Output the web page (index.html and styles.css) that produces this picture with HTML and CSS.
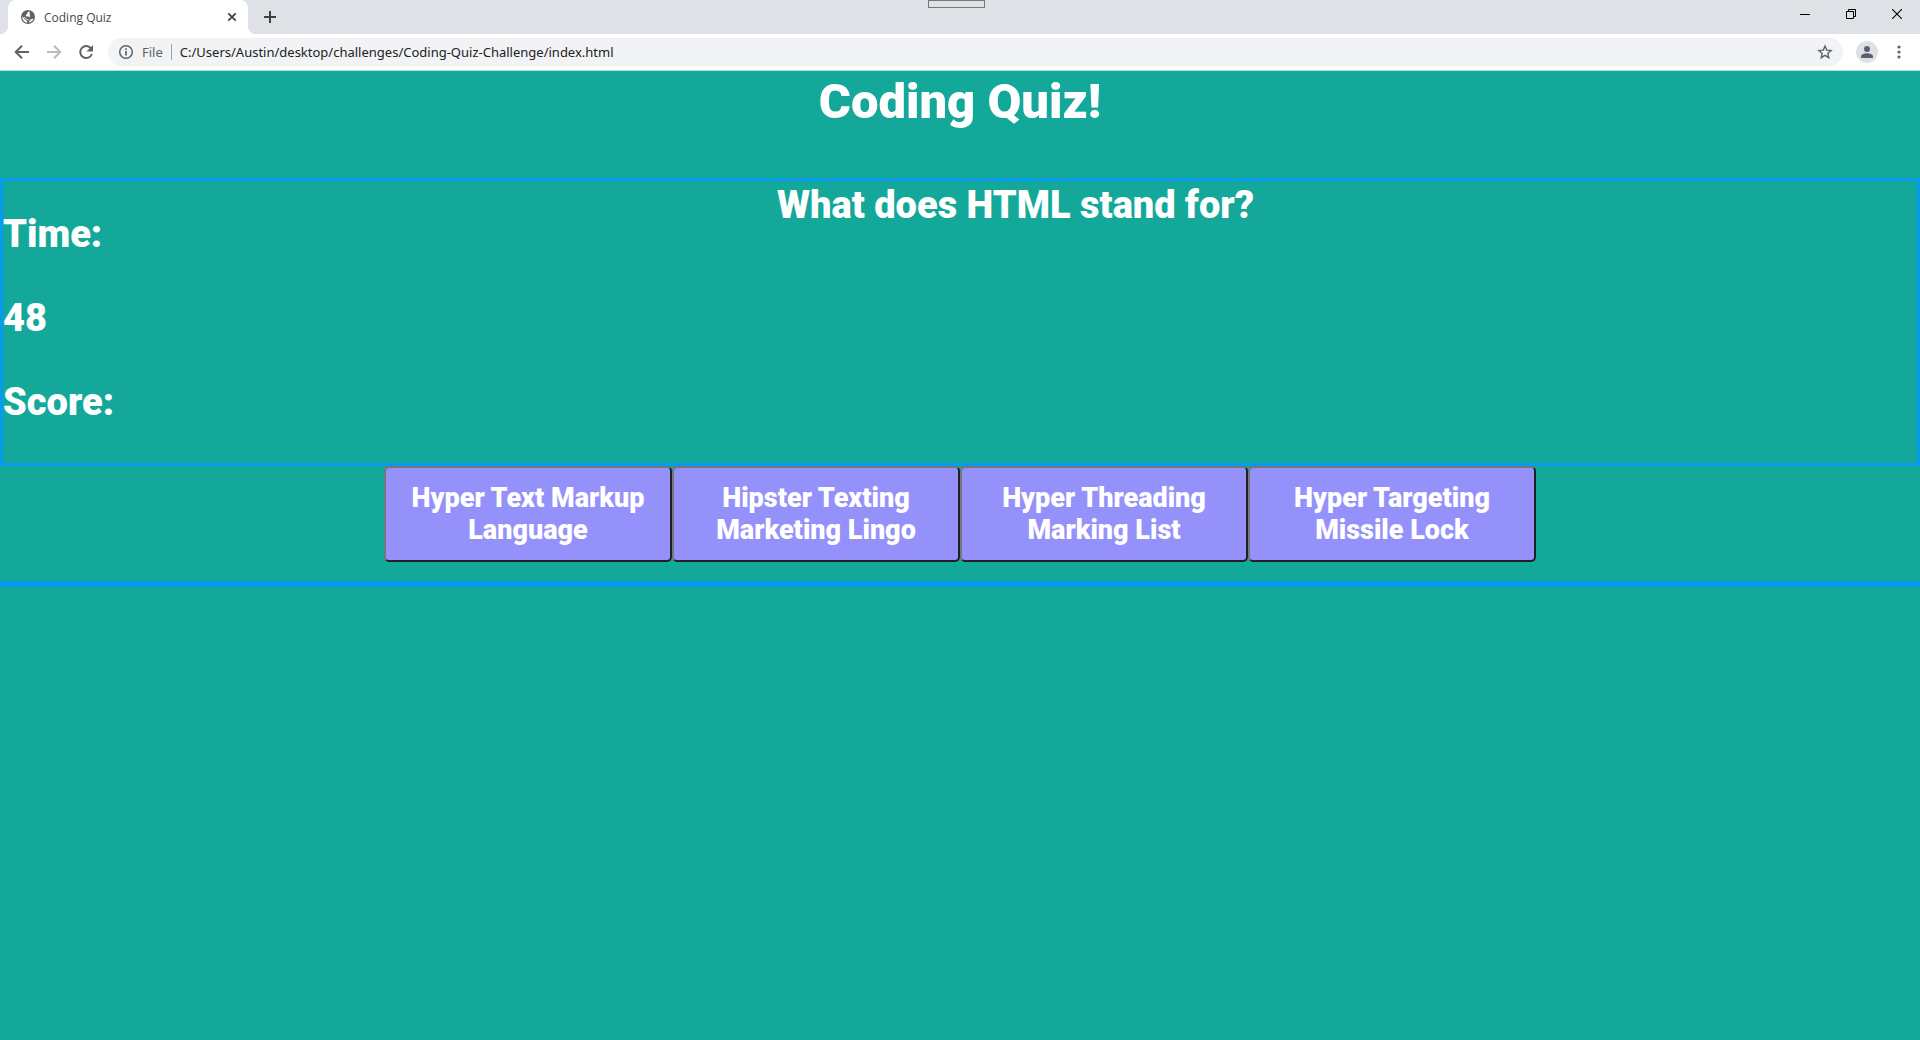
FILE: index.html
```html
<!DOCTYPE html>
<html lang="en">
<head>
<meta charset="utf-8">
<title>Coding Quiz</title>
<link rel="stylesheet" href="styles.css">
</head>
<body>
<header class="browser">
  <div class="tab-strip">
    <div class="tab">
      <svg class="globe" width="16" height="16" viewBox="0 0 16 16"><circle cx="8" cy="8" r="7" fill="#5f6368"/><path d="M9.500 2.300C8 2.800 7.300 3.300 7.500 4.300c0 1-1.700 1-1.700 2.200 0 .8.700 1.100 2.200 1.100 1.400 0 2.200.7 2.200 1.800 0 .8.600 1.100 1.500.9l2-.7c-.7 2-2.200 3.400-4.200 4-.1-1.600-1-2.300-2.100-2.500-1-.2-1.300-1.300-2.500-1.800L2.300 8.300C2.300 11 4.500 13.400 7 13.700l.2-1.500-1.900-1.500-3-2.600 2.500.2 2.600 1.900 2 1.300 1 1.300" fill="#fff"/></svg>
      <span class="tab-title">Coding Quiz</span>
      <button class="icon-button" aria-label="Close tab"><svg width="10" height="10" viewBox="0 0 10 10"><path d="m1.300 1.300 7.400 7.400m0-7.400L1.300 8.700" stroke="#3c4043" stroke-width="1.700"/></svg></button>
    </div>
    <button class="icon-button new-tab" aria-label="New tab"><svg width="12" height="12" viewBox="0 0 12 12"><path d="M6 0v12M0 6h12" stroke="#3c4043" stroke-width="2"/></svg></button>
    <div class="window-controls">
      <button class="icon-button" aria-label="Minimize"><svg width="10" height="10" viewBox="0 0 10 10"><path d="M0 5.500h10" stroke="#000"/></svg></button>
      <button class="icon-button" aria-label="Restore"><svg width="10" height="10" viewBox="0 0 10 10"><path d="M.5 2.500h7v7h-7zM2.500 2.500v-2h7v7h-2" fill="none" stroke="#000"/></svg></button>
      <button class="icon-button" aria-label="Close window"><svg width="10" height="10" viewBox="0 0 10 10"><path d="m0 0 10 10M10 0 0 10" stroke="#000" stroke-width="1.100"/></svg></button>
    </div>
    <div class="drag-handle"></div>
  </div>
  <div class="toolbar">
    <nav class="history">
      <button class="icon-button" aria-label="Back"><svg width="16" height="16" viewBox="0 0 16 16"><path d="M15 8H2.500M8 1.700 1.700 8 8 14.300" fill="none" stroke="#5f6368" stroke-width="2"/></svg></button>
      <button class="icon-button" aria-label="Forward"><svg width="16" height="16" viewBox="0 0 16 16"><path d="M1 8h12.500M8 1.700 14.300 8 8 14.300" fill="none" stroke="#babcbe" stroke-width="2"/></svg></button>
      <button class="icon-button" aria-label="Reload"><svg width="16" height="16" viewBox="0 0 16 16"><path d="M13.200 4.600A6 6 0 1 0 13.900 10" fill="none" stroke="#5f6368" stroke-width="2"/><path d="M15 1v6.500H8.500z" fill="#5f6368"/></svg></button>
    </nav>
    <div class="address">
      <svg width="16" height="16" viewBox="0 0 16 16"><circle cx="8" cy="8" r="6.300" fill="none" stroke="#5f6368" stroke-width="1.500"/><path d="M8 7v4.500M8 4.300V6" stroke="#5f6368" stroke-width="1.700"/></svg>
      <label class="scheme" for="url">File</label>
      <input class="url" id="url" type="text" value="C:/Users/Austin/desktop/challenges/Coding-Quiz-Challenge/index.html">
      <button class="icon-button" aria-label="Bookmark"><svg width="16" height="16" viewBox="0 0 16 16"><path d="m8 2 1.700 4.100 4.400.4-3.300 2.900 1 4.300L8 11.400l-3.800 2.300 1-4.300-3.300-2.900 4.400-.4z" fill="none" stroke="#5f6368" stroke-width="1.400"/></svg></button>
    </div>
    <button class="icon-button" aria-label="Profile"><svg width="22" height="22" viewBox="0 0 22 22"><circle cx="11" cy="11" r="11" fill="#dee1e6"/><circle cx="11" cy="8" r="3" fill="#5a6173"/><path d="M5 17v-1.500c0-2 3.500-3.200 6-3.200s6 1.200 6 3.200V17z" fill="#5a6173"/></svg></button>
    <button class="icon-button" aria-label="Menu"><svg width="16" height="16" viewBox="0 0 16 16" fill="#5f6368"><circle cx="8" cy="3" r="1.600"/><circle cx="8" cy="8" r="1.600"/><circle cx="8" cy="13" r="1.600"/></svg></button>
  </div>
</header>
<main class="quiz">
  <h1 class="title">Coding Quiz!</h1>
  <section class="board">
    <aside class="stats">
      <p>Time:</p>
      <p>48</p>
      <p>Score:</p>
    </aside>
    <h2 class="question">What does HTML stand for?</h2>
  </section>
  <section class="answers">
    <button class="answer">Hyper Text Markup Language</button>
    <button class="answer">Hipster Texting Marketing Lingo</button>
    <button class="answer">Hyper Threading Marking List</button>
    <button class="answer">Hyper Targeting Missile Lock</button>
  </section>
</main>
</body>
</html>
```
FILE: styles.css
```css
* {
  box-sizing: border-box;
}

body {
  margin: 0;
  min-height: 100vh;
  background: #14a89a;
  font-family: Roboto, "Liberation Sans", Arial, sans-serif;
}

.browser {
  background: #fff;
  border-bottom: 1px solid #b5e3de;
  font-family: "Noto Sans", "Open Sans", sans-serif;
}

.icon-button {
  display: flex;
  align-items: center;
  justify-content: center;
  padding: 0;
  border: 0;
  background: none;
}

.tab-strip {
  position: relative;
  display: flex;
  height: 34px;
  padding-left: 8px;
  background: #dee1e6;
}

.tab {
  position: relative;
  display: flex;
  align-items: center;
  gap: 8px;
  width: 240px;
  padding: 0 11px 0 12px;
  border-radius: 8px 8px 0 0;
  background: #fff;
}

.tab::before,
.tab::after {
  content: "";
  position: absolute;
  bottom: 0;
  width: 8px;
  height: 8px;
}

.tab::before {
  right: 100%;
  background: radial-gradient(circle at 0 0, #dee1e6 8px, #fff 8px);
}

.tab::after {
  left: 100%;
  background: radial-gradient(circle at 100% 0, #dee1e6 8px, #fff 8px);
}

.tab-title {
  flex: 1;
  font-family: "Open Sans", "Noto Sans", sans-serif;
  font-size: 12px;
  color: #45494d;
}

.new-tab {
  width: 44px;
}

.window-controls {
  display: flex;
  height: 28px;
  margin-left: auto;
}

.window-controls .icon-button {
  width: 46px;
}

.drag-handle {
  position: absolute;
  top: 0;
  left: calc(50% - 32px);
  width: 57px;
  height: 8px;
  border: 1px solid #75777b;
}

.toolbar {
  display: flex;
  align-items: center;
  gap: 13px;
  height: 36px;
  padding: 0 13px 0 14px;
}

.history {
  display: flex;
  gap: 16px;
  margin-right: 1px;
}

.address {
  flex: 1;
  display: flex;
  align-items: center;
  height: 28px;
  padding: 0 10px;
  border-radius: 14px;
  background: #f1f3f4;
  font-size: 13px;
}

.scheme {
  margin: 0 8px;
  padding-right: 8px;
  border-right: 1px solid #9aa0a6;
  line-height: 16px;
  color: #5f6368;
}

.url {
  flex: 1;
  min-width: 0;
  padding: 0;
  border: 0;
  background: none;
  font: inherit;
  color: #202124;
}

.quiz {
  border-bottom: 6px solid #069bf0;
  color: #fff;
  font-weight: 900;
}

.title {
  margin: 0;
  padding: 5px 0 50px;
  font-size: 49px;
  font-weight: 900;
  line-height: 52px;
  text-align: center;
}

.board {
  display: flex;
  border: 3px solid #069bf0;
  font-size: 38px;
  line-height: 40px;
}

.stats {
  display: flex;
  flex-direction: column;
  gap: 44px;
  padding: 33px 0 41px;
}

.stats p {
  margin: 0;
}

.question {
  flex: 1;
  margin: 0;
  padding-top: 4px;
  font-size: 38px;
  font-weight: 900;
  text-align: center;
}

.answers {
  display: flex;
  justify-content: center;
  padding-bottom: 19px;
}

.answer {
  width: 15%;
  padding: 14px 16px;
  border: 2px solid;
  border-color: #767676 #212121 #212121 #767676;
  border-radius: 5px;
  background: #9591fa;
  color: #fff;
  font-family: inherit;
  font-size: 27px;
  font-weight: 900;
  line-height: 32px;
}
```
